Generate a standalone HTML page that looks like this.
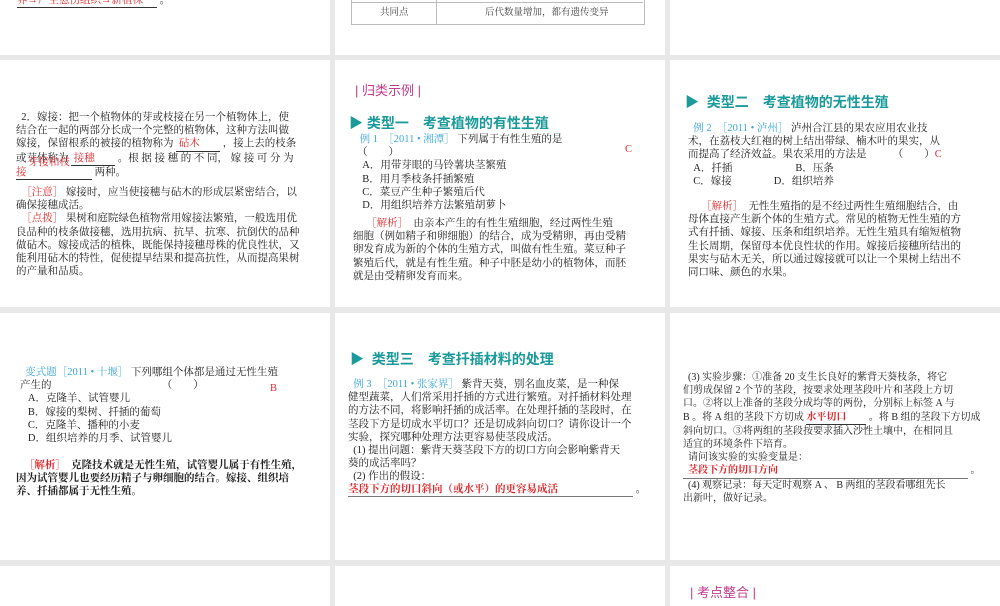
<!DOCTYPE html>
<html><head><meta charset="utf-8"><style>
body{margin:0;width:1000px;height:600px;background:#e8e8e8;position:relative;overflow:hidden;font-family:"Liberation Serif","Noto Serif CJK SC",serif;font-size:10.5px;color:#222}
.p{position:absolute;background:#fff;overflow:hidden}
.t{position:absolute;line-height:13.2px;white-space:nowrap}
.r{color:#e0282c}.b{color:#3ba7d6}.tl{color:#1a9a9a;font-family:"Liberation Sans","Noto Sans CJK SC",sans-serif;font-weight:bold;font-size:14px}
.pk{color:#c03c8c;font-family:"Liberation Sans","Noto Sans CJK SC",sans-serif;font-size:13px}
u{text-decoration:none;border-bottom:1px solid #333;display:inline-block}
.bd{font-weight:bold}
</style></head><body>
<!-- row1 -->
<div class="p" style="left:0;top:0;width:330px;height:55px">
<div class="t" style="left:17px;top:-6px"><u style="width:140px"><span class="r">养→产生愈伤组织→新植株</span></u> 。</div>
</div>
<div class="p" style="left:335px;top:0;width:330px;height:55px">
<div style="position:absolute;left:16px;top:-10px;width:292px;height:33px;border:1px solid #bbb"></div>
<div style="position:absolute;left:16px;top:2px;width:292px;border-top:1px solid #bbb"></div>
<div style="position:absolute;left:101px;top:-10px;height:34px;border-left:1px solid #bbb"></div>
<div class="t" style="left:45px;top:7px;font-size:9.5px;color:#444">共同点</div>
<div class="t" style="left:150px;top:7px;font-size:9.5px;color:#444">后代数量增加，都有遗传变异</div>
</div>
<div class="p" style="left:670px;top:0;width:330px;height:55px"></div>
<!-- row2 -->
<div class="p" style="left:0;top:60px;width:330px;height:247px">
<div class="t" style="left:16px;top:51px">&nbsp;&nbsp;2．嫁接：把一个植物体的芽或枝接在另一个植物体上，使<br>结合在一起的两部分长成一个完整的植物体，这种方法叫做<br>嫁接，保留根系的被接的植物称为 <u style="width:44px"><span class="r">&nbsp;砧木</span></u> ，接上去的枝条<br>或芽体称为 <u style="width:44px"><span class="r">&nbsp;接穗</span></u> 。根 据 接 穗 的 不 同， 嫁 接 可 分 为<br><u style="width:76px"><span class="r">接</span></u> 两种。</div>
<div class="t r" style="left:28px;top:96px">芽接和枝</div>
<div class="t" style="left:16px;top:126px"><span class="r">&nbsp;&nbsp;［注意］</span> 嫁接时，应当使接穗与砧木的形成层紧密结合，以<br>确保接穗成活。<br><span class="r">&nbsp;&nbsp;［点拨］</span> 果树和庭院绿色植物常用嫁接法繁殖，一般选用优<br>良品种的枝条做接穗，选用抗病、抗旱、抗寒、抗倒伏的品种<br>做砧木。嫁接成活的植株，既能保持接穗母株的优良性状，又<br>能利用砧木的特性，促使提早结果和提高抗性，从而提高果树<br>的产量和品质。</div>
</div>
<div class="p" style="left:335px;top:60px;width:330px;height:247px">
<div class="t pk" style="left:20px;top:24px">| 归类示例 |</div>
<div class="t tl" style="left:14px;top:57px">▶ 类型一　考查植物的有性生殖</div>
<div class="t" style="left:22px;top:73px"><span class="b">&nbsp;例 1　［2011 • 湘潭］</span> 下列属于有性生殖的是<br>（　　）<br>&nbsp;&nbsp;A．用带芽眼的马铃薯块茎繁殖<br>&nbsp;&nbsp;B．用月季枝条扦插繁殖<br>&nbsp;&nbsp;C．菜豆产生种子繁殖后代<br>&nbsp;&nbsp;D．用组织培养方法繁殖胡萝卜</div>
<div class="t r" style="left:290px;top:83px">C</div>
<div class="t" style="left:18px;top:157px">&nbsp;&nbsp;&nbsp;&nbsp;&nbsp;<span class="r">［解析］</span>　由亲本产生的有性生殖细胞，经过两性生殖<br>细胞（例如精子和卵细胞）的结合，成为受精卵，再由受精<br>卵发育成为新的个体的生殖方式，叫做有性生殖。菜豆种子<br>繁殖后代，就是有性生殖。种子中胚是幼小的植物体，而胚<br>就是由受精卵发育而来。</div>
</div>
<div class="p" style="left:670px;top:60px;width:330px;height:247px">
<div class="t tl" style="left:15px;top:36px">▶&nbsp; 类型二　考查植物的无性生殖</div>
<div class="t" style="left:18px;top:62px"><span class="b">&nbsp;&nbsp;例 2　［2011 • 泸州］</span> 泸州合江县的果农应用农业技<br>术，在荔枝大红袍的树上结出带绿、楠木叶的果实，从<br>而提高了经济效益。果农采用的方法是　　　（　　）<span class="r">C</span><br>&nbsp;&nbsp;A．扦插　　　　　　B．压条<br>&nbsp;&nbsp;C．嫁接　　　　D．组织培养</div>
<div class="t" style="left:18px;top:140px">&nbsp;&nbsp;&nbsp;&nbsp;&nbsp;<span class="r">［解析］</span>　无性生殖指的是不经过两性生殖细胞结合，由<br>母体直接产生新个体的生殖方式。常见的植物无性生殖的方<br>式有扦插、嫁接、压条和组织培养。无性生殖具有缩短植物<br>生长周期，保留母本优良性状的作用。嫁接后接穗所结出的<br>果实与砧木无关，所以通过嫁接就可以让一个果树上结出不<br>同口味、颜色的水果。</div>
</div>
<!-- row3 -->
<div class="p" style="left:0;top:313px;width:330px;height:247px">
<div class="t" style="left:20px;top:53px"><span class="b">&nbsp;&nbsp;变式题［2011 • 十堰］</span> 下列哪组个体都是通过无性生殖<br>产生的　　　　　　　　　　　（　　）<br>&nbsp;&nbsp;&nbsp;A．克隆羊、试管婴儿<br>&nbsp;&nbsp;&nbsp;B．嫁接的梨树、扦插的葡萄<br>&nbsp;&nbsp;&nbsp;C．克隆羊、播种的小麦<br>&nbsp;&nbsp;&nbsp;D．组织培养的月季、试管婴儿</div>
<div class="t r" style="left:270px;top:69px">B</div>
<div class="t bd" style="left:16px;top:146px">&nbsp;&nbsp;&nbsp;<span class="r">［解析］</span>　克隆技术就是无性生殖，试管婴儿属于有性生殖，<br>因为试管婴儿也要经历精子与卵细胞的结合。嫁接、组织培<br>养、扦插都属于无性生殖。</div>
</div>
<div class="p" style="left:335px;top:313px;width:330px;height:247px">
<div class="t tl" style="left:15px;top:40px">▶&nbsp; 类型三　考查扦插材料的处理</div>
<div class="t" style="left:13px;top:65px"><span class="b">&nbsp;&nbsp;例 3　［2011 • 张家界］</span> 紫背天葵，别名血皮菜，是一种保<br>健型蔬菜，人们常采用扦插的方式进行繁殖。对扦插材料处理<br>的方法不同，将影响扦插的成活率。在处理扦插的茎段时，在<br>茎段下方是切成水平切口？还是切成斜向切口？请你设计一个<br>实验，探究哪种处理方法更容易使茎段成活。<br>&nbsp;&nbsp;(1) 提出问题：紫背天葵茎段下方的切口方向会影响紫背天<br>葵的成活率吗？<br>&nbsp;&nbsp;(2) 作出的假设：</div>
<div class="t" style="left:13px;top:170px"><u style="width:285px;border-color:#777"><span class="r bd">茎段下方的切口斜向（或水平）的更容易成活</span></u> 。</div>
</div>
<div class="p" style="left:670px;top:313px;width:330px;height:247px">
<div class="t" style="left:13px;top:58px;font-size:10px">&nbsp;&nbsp;(3) 实验步骤：①准备 20 支生长良好的紫背天葵枝条，将它<br>们剪成保留 2 个节的茎段，按要求处理茎段叶片和茎段上方切<br>口。②将以上准备的茎段分成均等的两份，分别标上标签 A 与<br>B 。将 A 组的茎段下方切成 <u style="width:60px"><span class="r bd">水平切口</span></u> 。将 B 组的茎段下方切成<br>斜向切口。③将两组的茎段按要求插入沙性土壤中，在相同且<br>适宜的环境条件下培育。<br>&nbsp;&nbsp;请问该实验的实验变量是：<br><u style="width:285px;border-color:#777"><span class="r bd">&nbsp;&nbsp;茎段下方的切口方向</span></u> 。<br>&nbsp;&nbsp;(4) 观察记录：每天定时观察 A 、 B 两组的茎段看哪组先长<br>出新叶，做好记录。</div>
</div>
<!-- row4 -->
<div class="p" style="left:0;top:566px;width:330px;height:40px"></div>
<div class="p" style="left:335px;top:566px;width:330px;height:40px"></div>
<div class="p" style="left:670px;top:566px;width:330px;height:40px">
<div class="t pk" style="left:20px;top:20px">| 考点整合 |</div>
</div>
</body></html>
